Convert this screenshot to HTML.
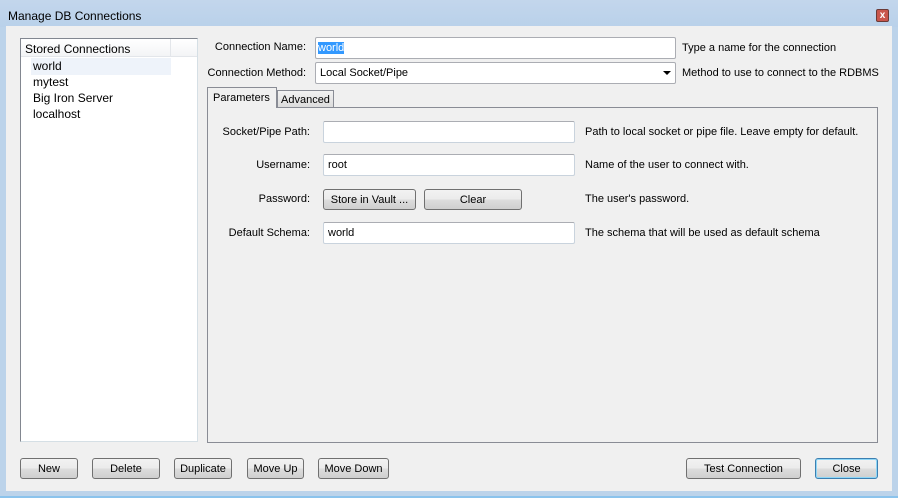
<!DOCTYPE html><html><head><style>
*{box-sizing:border-box;margin:0;padding:0}
body{width:898px;height:498px;background:#bcd3ea;font-family:"Liberation Sans",sans-serif;font-size:11px;color:#000;position:relative;overflow:hidden}
.a{position:absolute;white-space:nowrap}
.t{position:absolute;white-space:nowrap;line-height:14px}
.in{position:absolute;background:#fff;border:1px solid #c9d3dd;border-top-color:#abadb3;border-radius:2px;padding-left:4px;line-height:20px}
.btn{position:absolute;border:1px solid #707070;border-radius:3px;background:linear-gradient(#f2f2f2 0%,#ebebeb 50%,#dddddd 51%,#cfcfcf 100%);text-align:center;line-height:20px}
.r{text-align:right}
</style></head><body>
<div class="a" style="left:0;top:0;width:898px;height:27px;background:linear-gradient(#c3d6ec,#b9d1ea)"></div>
<div class="t" style="left:8px;top:9px;font-size:12px">Manage DB Connections</div>
<div class="a" style="left:876px;top:9px;width:13px;height:13px;border:1px solid #6b3a36;background:#c9564c;border-radius:2px;color:#fff;font-size:10px;line-height:11px;text-align:center;font-weight:bold">x</div>
<div class="a" style="left:6px;top:26px;width:886px;height:465px;background:#f0f0f0"></div>
<div class="a" style="left:0;top:496px;width:898px;height:2px;background:#8bc3ec"></div>
<!-- list -->
<div class="a" style="left:20px;top:38px;width:178px;height:404px;background:#fff;border:1px solid #d5dfe5;border-left-color:#828790;border-top-color:#828790"></div>
<div class="a" style="left:21px;top:39px;width:176px;height:18px;background:linear-gradient(#fff,#f3f4f6);border-bottom:1px solid #e3e6ea"></div>
<div class="a" style="left:170px;top:39px;width:1px;height:18px;background:#e3e6ea"></div>
<div class="t" style="left:25px;top:42px;font-size:12px">Stored Connections</div>
<div class="a" style="left:31px;top:58px;width:140px;height:17px;background:#eef3fa"></div>
<div class="t" style="left:33px;top:59px;font-size:12px">world</div>
<div class="t" style="left:33px;top:75px;font-size:12px">mytest</div>
<div class="t" style="left:33px;top:91px;font-size:12px">Big Iron Server</div>
<div class="t" style="left:33px;top:107px;font-size:12px">localhost</div>
<!-- top fields -->
<div class="t r" style="left:200px;width:106px;top:40px">Connection Name:</div>
<div class="in" style="left:315px;top:37px;width:361px;height:22px;border-color:#abadb3"><span style="background:#3399ff;color:#fff;margin-left:-2px">world</span></div>
<div class="t" style="left:682px;top:41px">Type a name for the connection</div>
<div class="t r" style="left:200px;width:106px;top:66px">Connection Method:</div>
<div class="in" style="left:315px;top:62px;width:361px;height:22px;border-color:#abadb3">Local Socket/Pipe</div>
<div class="a" style="left:663px;top:71px;width:0;height:0;border-left:4px solid transparent;border-right:4px solid transparent;border-top:4px solid #000"></div>
<div class="t" style="left:682px;top:66px">Method to use to connect to the RDBMS</div>
<!-- tabs -->
<div class="a" style="left:207px;top:107px;width:671px;height:336px;border:1px solid #898c95;background:#f0f0f0"></div>
<div class="a" style="left:277px;top:90px;width:57px;height:18px;border:1px solid #898c95;background:linear-gradient(#f2f2f2,#dcdcdc)"></div>
<div class="t" style="left:281px;top:93px">Advanced</div>
<div class="a" style="left:207px;top:87px;width:70px;height:21px;border:1px solid #898c95;border-bottom:none;background:#f0f0f0"></div>
<div class="t" style="left:213px;top:91px">Parameters</div>
<!-- params -->
<div class="t r" style="left:210px;width:100px;top:125px">Socket/Pipe Path:</div>
<div class="in" style="left:323px;top:121px;width:252px;height:22px"></div>
<div class="t" style="left:585px;top:125px">Path to local socket or pipe file. Leave empty for default.</div>
<div class="t r" style="left:210px;width:100px;top:158px">Username:</div>
<div class="in" style="left:323px;top:154px;width:252px;height:22px">root</div>
<div class="t" style="left:585px;top:158px">Name of the user to connect with.</div>
<div class="t r" style="left:210px;width:100px;top:192px">Password:</div>
<div class="btn" style="left:323px;top:189px;width:93px;height:21px">Store in Vault ...</div>
<div class="btn" style="left:424px;top:189px;width:98px;height:21px">Clear</div>
<div class="t" style="left:585px;top:192px">The user's password.</div>
<div class="t r" style="left:210px;width:100px;top:226px">Default Schema:</div>
<div class="in" style="left:323px;top:222px;width:252px;height:22px">world</div>
<div class="t" style="left:585px;top:226px">The schema that will be used as default schema</div>
<!-- bottom -->
<div class="btn" style="left:20px;top:458px;width:58px;height:21px">New</div>
<div class="btn" style="left:92px;top:458px;width:68px;height:21px">Delete</div>
<div class="btn" style="left:174px;top:458px;width:58px;height:21px">Duplicate</div>
<div class="btn" style="left:247px;top:458px;width:57px;height:21px">Move Up</div>
<div class="btn" style="left:318px;top:458px;width:71px;height:21px">Move Down</div>
<div class="btn" style="left:686px;top:458px;width:115px;height:21px">Test Connection</div>
<div class="btn" style="left:815px;top:458px;width:63px;height:21px;border-color:#3c7fb1;box-shadow:inset 0 0 0 1px #8fd7f7">Close</div>
</body></html>
